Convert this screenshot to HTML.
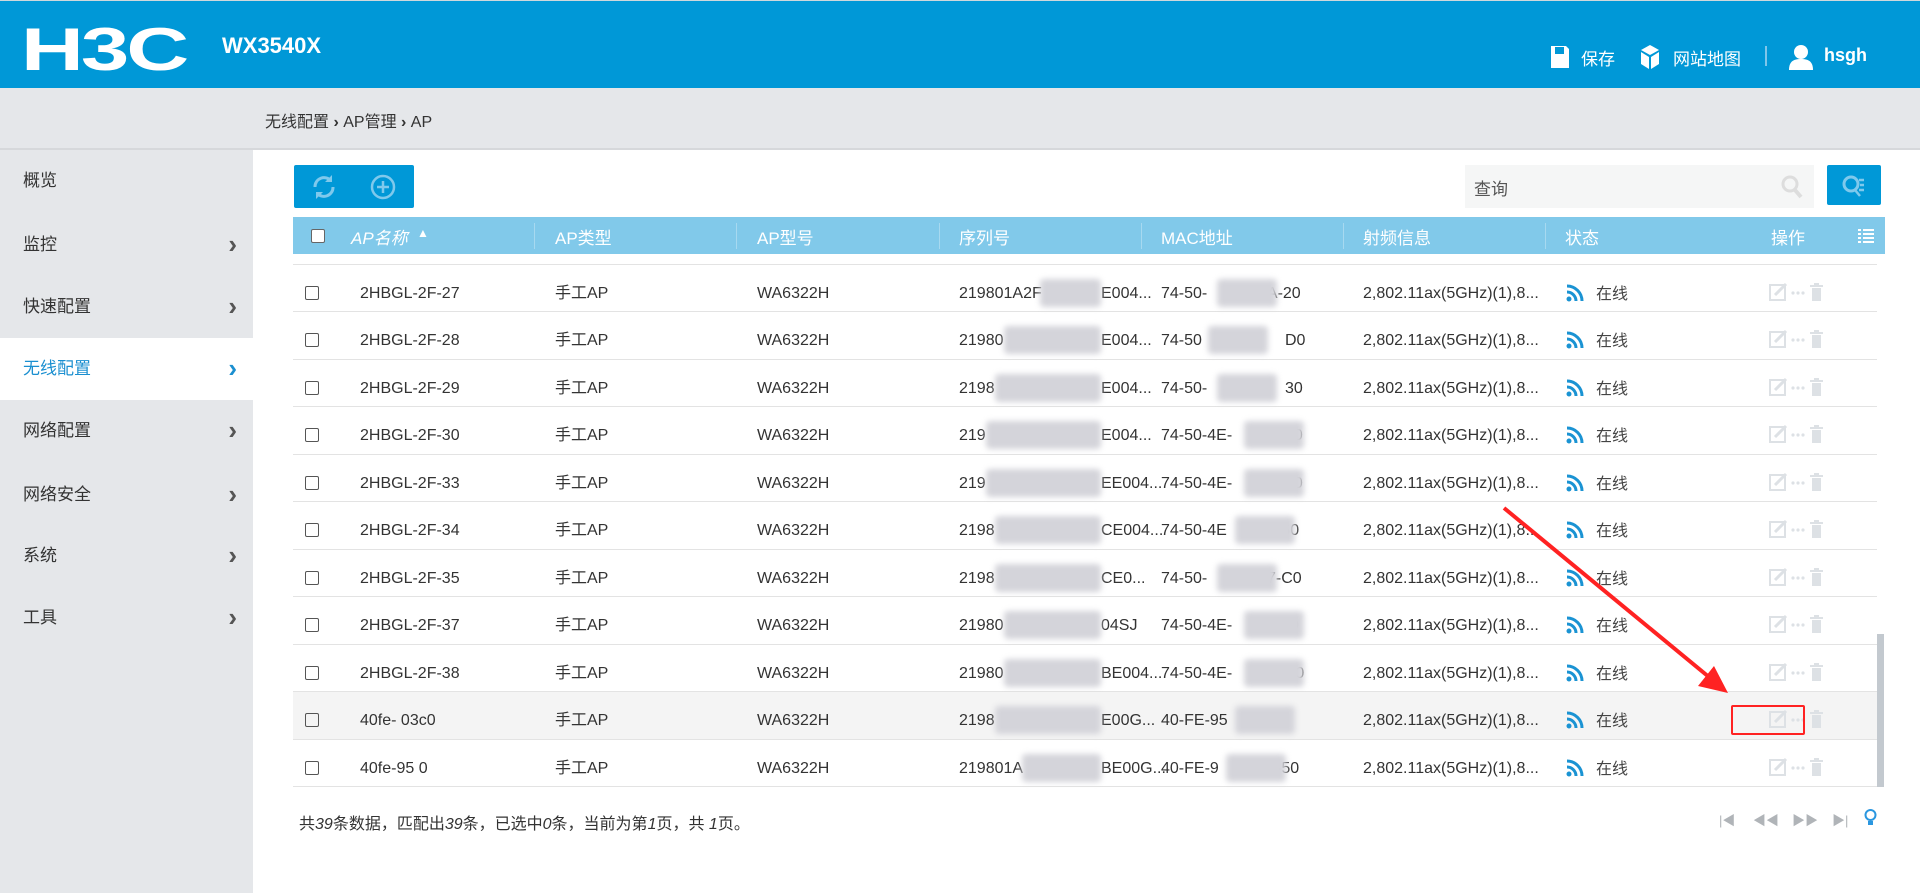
<!DOCTYPE html>
<html><head><meta charset="utf-8"><style>
*{margin:0;padding:0;box-sizing:border-box}
body{width:1920px;height:893px;overflow:hidden;background:#fff;font-family:"Liberation Sans","Noto Sans CJK SC",sans-serif;color:#333;position:relative}
.a{position:absolute;white-space:nowrap}
#hd{left:0;top:0;width:1920px;height:88px;background:#0098d7;border-top:1px solid #cfd8dc}
#bc{left:0;top:88px;width:1920px;height:62px;background:#e5e7ea;border-bottom:2px solid #d6d8db}
#sb{left:0;top:150px;width:253px;height:743px;background:#e5e7ea}
.si{left:0;width:253px;height:62px;font-size:17px;color:#333;line-height:62px;padding-left:23px}
.si .ch{position:absolute;right:16px;top:-1px;font-size:26px;color:#555;font-weight:bold}
.row{left:293px;width:1584px;height:47.5px;border-bottom:1px solid #e3e3e3;font-size:16px;color:#333}
.row span{position:absolute;top:19px;line-height:20px;height:20px}
.cb{width:14px;height:14px;border:1px solid #555;border-radius:2px;position:absolute}
.blur{position:absolute;background:#d4d4da;filter:blur(3px);border-radius:4px}
</style></head><body>
<div id="hd" class="a">
 <div class="a" style="left:21px;top:14px;font-size:60px;line-height:70px;font-weight:bold;color:#fff;transform:scaleX(1.45);transform-origin:left;letter-spacing:-2px">H3C</div>
 <div class="a" style="left:222px;top:32px;font-size:22px;font-weight:bold;color:#fff">WX3540X</div>
 <svg class="a" style="left:1550px;top:44px" width="20" height="24" viewBox="0 0 20 24"><path d="M1 1h15l3 3v19H1z" fill="#fff"/><rect x="5" y="2" width="9" height="7" fill="#0098d7"/></svg>
 <div class="a" style="left:1581px;top:44px;font-size:17px;color:#fff">保存</div>
 <svg class="a" style="left:1640px;top:43px" width="20" height="26" viewBox="0 0 20 26"><path d="M10 1l9 5-9 5-9-5z" fill="#fff"/><path d="M1 8l8 5v12l-8-5zM19 8l-8 5v12l8-5z" fill="#fff"/></svg>
 <div class="a" style="left:1673px;top:44px;font-size:17px;color:#fff">网站地图</div>
 <div class="a" style="left:1765px;top:45px;width:2px;height:20px;background:#7fc6ea"></div>
 <svg class="a" style="left:1789px;top:43px" width="24" height="26" viewBox="0 0 24 26"><circle cx="12" cy="8" r="7" fill="#fff"/><path d="M0 26c0-9 5-11 12-11s12 2 12 11z" fill="#fff"/></svg>
 <div class="a" style="left:1824px;top:44px;font-size:18px;color:#fff;font-weight:bold">hsgh</div>
</div>
<div id="bc" class="a"><div class="a" style="left:265px;top:20px;font-size:16px;color:#333">无线配置 <b>›</b> AP管理 <b>›</b> AP</div></div>
<div id="sb" class="a"></div>
<div class="a si" style="top:150px">概览</div>
<div class="a si" style="top:214px">监控<span class="ch">›</span></div>
<div class="a si" style="top:276px">快速配置<span class="ch">›</span></div>
<div class="a si" style="top:338px;background:#fff;color:#1b8fd0">无线配置<span class="ch" style="color:#1b8fd0">›</span></div>
<div class="a si" style="top:400px">网络配置<span class="ch">›</span></div>
<div class="a si" style="top:464px">网络安全<span class="ch">›</span></div>
<div class="a si" style="top:525px">系统<span class="ch">›</span></div>
<div class="a si" style="top:587px">工具<span class="ch">›</span></div>

<div class="a" style="left:294px;top:165px;width:120px;height:43px;background:#0098d7;border-radius:2px"></div>
<svg class="a" style="left:309px;top:172px" width="30" height="30" viewBox="0 0 30 30"><path d="M6 15a9 9 0 0 1 16-6M24 15a9 9 0 0 1-16 6" stroke="#7fc9ec" stroke-width="3" fill="none"/><path d="M23 3v7h-7zM7 27v-7h7z" fill="#7fc9ec"/></svg>
<svg class="a" style="left:369px;top:173px" width="28" height="28" viewBox="0 0 28 28"><circle cx="14" cy="14" r="11" stroke="#7fc9ec" stroke-width="2.5" fill="none"/><path d="M14 8v12M8 14h12" stroke="#7fc9ec" stroke-width="2.5"/></svg>
<div class="a" style="left:1465px;top:165px;width:349px;height:43px;background:#f5f6f6"></div>
<div class="a" style="left:1474px;top:175px;font-size:17px;color:#555">查询</div>
<svg class="a" style="left:1780px;top:174px" width="24" height="26" viewBox="0 0 24 26"><circle cx="10" cy="10" r="7" stroke="#ddd" stroke-width="3" fill="none"/><path d="M15 16l6 7" stroke="#ddd" stroke-width="4"/></svg>
<div class="a" style="left:1827px;top:165px;width:54px;height:40px;background:#0098d7;border-radius:2px"></div>
<svg class="a" style="left:1841px;top:173px" width="26" height="26" viewBox="0 0 26 26"><circle cx="10" cy="11" r="7" stroke="#7fc9ec" stroke-width="3" fill="none"/><path d="M14 17l5 6M18 7h5M19 12h4M18 17h5" stroke="#7fc9ec" stroke-width="2.5"/></svg>

<div class="a" style="left:293px;top:217px;width:1592px;height:37px;background:#81c9ea"></div>
<div class="a" style="left:293px;top:217px;width:1592px;height:37px;font-size:17px;color:#fff">
 <div class="cb" style="left:18px;top:12px;background:#fff;border-color:#666"></div>
 <span class="a" style="left:58px;top:7px;font-style:italic">AP名称</span><span class="a" style="left:124px;top:9px;font-size:12px">▲</span>
 <span class="a" style="left:262px;top:7px">AP类型</span><span class="a" style="left:464px;top:7px">AP型号</span>
 <span class="a" style="left:666px;top:7px">序列号</span><span class="a" style="left:868px;top:7px">MAC地址</span>
 <span class="a" style="left:1070px;top:7px">射频信息</span><span class="a" style="left:1272px;top:7px">状态</span>
 <span class="a" style="left:1478px;top:7px">操作</span>
 <svg class="a" style="left:1565px;top:12px" width="16" height="14" viewBox="0 0 16 14"><path d="M0 1h3M5 1h11M0 5h3M5 5h11M0 9h3M5 9h11M0 13h3M5 13h11" stroke="#fff" stroke-width="2"/></svg>
 <div class="a" style="left:241px;top:6px;width:1px;height:26px;background:#a7d9f0"></div>
 <div class="a" style="left:443px;top:6px;width:1px;height:26px;background:#a7d9f0"></div>
 <div class="a" style="left:646px;top:6px;width:1px;height:26px;background:#a7d9f0"></div>
 <div class="a" style="left:848px;top:6px;width:1px;height:26px;background:#a7d9f0"></div>
 <div class="a" style="left:1050px;top:6px;width:1px;height:26px;background:#a7d9f0"></div>
 <div class="a" style="left:1252px;top:6px;width:1px;height:26px;background:#a7d9f0"></div>
</div>
<div class="a" style="left:293px;top:254px;width:1584px;height:11px;border-bottom:1px solid #e3e3e3"></div>
<div class="a" style="left:1877px;top:634px;width:7px;height:153px;background:#c3c9cf"></div>

<div id="rows"></div>
<script>
var d=[["2HBGL-2F-27","219801A2F","E004...","74-50-","2A-20"],["2HBGL-2F-28","21980","E004...","74-50","D0"],["2HBGL-2F-29","2198","E004...","74-50-","30"],["2HBGL-2F-30","219","E004...","74-50-4E-","00"],["2HBGL-2F-33","219","EE004...","74-50-4E-","20"],["2HBGL-2F-34","2198","CE004...","74-50-4E","-60"],["2HBGL-2F-35","2198","CE0...","74-50-","7-C0"],["2HBGL-2F-37","21980","04SJ","74-50-4E-","15-60"],["2HBGL-2F-38","21980","BE004...","74-50-4E-","D3-C0"],["40fe-    03c0","2198","E00G...","40-FE-95",""],["40fe-95     0","219801A","BE00G...","40-FE-9","-50"]];
var h='';
d.forEach(function(r,i){var t=264.5+i*47.5;
h+='<div class="a row" style="top:'+t+'px;'+(i==9?'background:#f4f4f4':'')+'">'+
'<div class="cb" style="left:12px;top:21px"></div>'+
'<span style="left:67px">'+r[0]+'</span><span style="left:262px">手工AP</span><span style="left:464px">WA6322H</span>'+
'<span style="left:666px">'+r[1]+'</span><span style="left:808px">'+r[2]+'</span>'+
'<div class="blur" style="left:'+(666+r[1].length*9)+'px;top:14px;width:'+(142-r[1].length*9)+'px;height:28px"></div>'+
'<span style="left:868px">'+r[3]+'</span><span style="left:'+(1010-r[4].length*9)+'px">'+r[4]+'</span>'+
'<div class="blur" style="left:'+(870+r[3].length*9)+'px;top:14px;width:60px;height:28px"></div>'+
'<span style="left:1070px">2,802.11ax(5GHz)(1),8...</span>'+
'<svg style="position:absolute;left:1273px;top:19px" width="18" height="18" viewBox="0 0 18 18"><circle cx="3" cy="15" r="2.5" fill="#1a93d3"/><path d="M1 8a9 9 0 0 1 9 9M1 2a15 15 0 0 1 15 15" stroke="#1a93d3" stroke-width="3" fill="none"/></svg>'+
'<span style="left:1303px;top:20px;color:#444">在线</span>'+
'<svg style="position:absolute;left:1476px;top:17px" width="60" height="20" viewBox="0 0 60 20"><rect x="1" y="3" width="15" height="15" stroke="#dde1e5" stroke-width="2" fill="none"/><path d="M6 13l11-11" stroke="#dde1e5" stroke-width="3"/><circle cx="24" cy="11" r="1.6" fill="#dde1e5"/><circle cx="29" cy="11" r="1.6" fill="#dde1e5"/><circle cx="34" cy="11" r="1.6" fill="#dde1e5"/><path d="M41 4h13M45 2h5" stroke="#dde1e5" stroke-width="2"/><rect x="43" y="6" width="9" height="13" fill="#dde1e5"/></svg>'+
'</div>';});
document.getElementById('rows').innerHTML=h;
</script>
<div class="a" style="left:1731px;top:705px;width:74px;height:30px;border:2px solid #f22;border-radius:2px"></div>
<svg class="a" style="left:1500px;top:504px" width="232" height="192" viewBox="0 0 232 192"><path d="M4 4L215 178" stroke="#f22" stroke-width="4"/><path d="M228 189l-30-7 16-20z" fill="#f22"/></svg>

<div class="a" style="left:299px;top:810px;font-size:16px;color:#333">共<i>39</i>条数据，匹配出<i>39</i>条，已选中<i>0</i>条，当前为第<i>1</i>页，共 <i>1</i>页。</div>
<div class="a" style="left:1719px;top:810px;font-size:13px;color:#b0b4b8;letter-spacing:0">
<span class="a" style="left:0">|◀</span><span class="a" style="left:34px">◀◀</span><span class="a" style="left:73px">▶▶</span><span class="a" style="left:113px">▶|</span>
</div>
<svg class="a" style="left:1864px;top:809px" width="13" height="18" viewBox="0 0 13 18"><circle cx="6.5" cy="6" r="5" stroke="#2a97e0" stroke-width="2" fill="none"/><rect x="4" y="12" width="5" height="4" fill="#2a97e0"/></svg>
</body></html>
